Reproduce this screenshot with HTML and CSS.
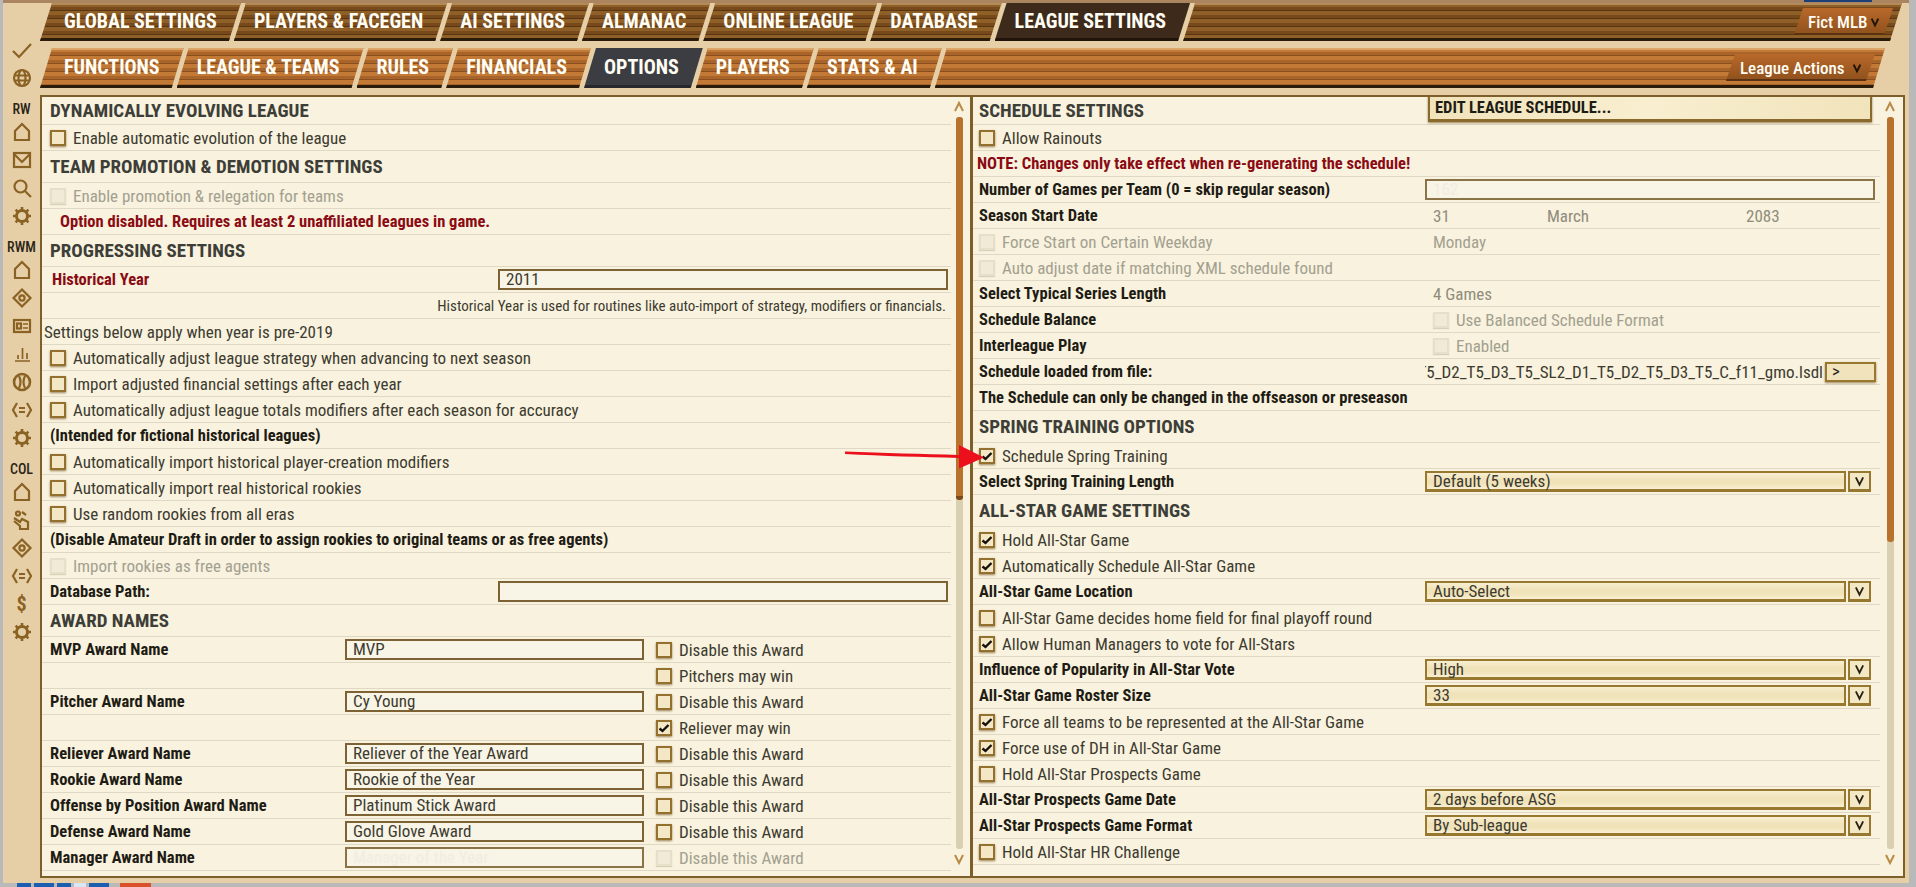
FILE: index.html
```html
<!DOCTYPE html>
<html lang="en">
<head>
    <meta charset="UTF-8">
    <title>League Settings</title>
    <link rel="stylesheet" href="styles.css">
</head>
<body>
<svg class="defs" width="0" height="0">
    <symbol id="i-check" viewBox="0 0 22 22"><path d="M2 12l6 6L20 5"/></symbol>
    <symbol id="i-globe" viewBox="0 0 22 22"><circle cx="11" cy="11" r="8"/><ellipse cx="11" cy="11" rx="3.5" ry="8"/><path d="M3 8.5h16M3 13.5h16"/></symbol>
    <symbol id="i-home" viewBox="0 0 22 22"><path d="M11 3l7 7v9H4v-9z"/></symbol>
    <symbol id="i-mail" viewBox="0 0 22 22"><rect x="3" y="4" width="16" height="14"/><path d="M3 5l8 8 8-8"/></symbol>
    <symbol id="i-search" viewBox="0 0 22 22"><circle cx="9.5" cy="9.5" r="6"/><path d="M14 14l6 6"/></symbol>
    <symbol id="i-gear" viewBox="0 0 22 22"><circle cx="11" cy="11" r="5.5" stroke-width="3"/><path d="M11 2v4M11 16v4M2 11h4M16 11h4M4.6 4.6l3 3M14.4 14.4l3 3M4.6 17.4l3-3M14.4 7.6l3-3" stroke-width="2.6"/></symbol>
    <symbol id="i-target" viewBox="0 0 22 22"><path d="M11 2.5l8.5 8.5-8.5 8.5L2.5 11z"/><circle cx="11" cy="11" r="2.6"/></symbol>
    <symbol id="i-card" viewBox="0 0 22 22"><rect x="3" y="5" width="16" height="12"/><rect x="6" y="8.5" width="4" height="5" class="fill"/><path d="M12 9h5M12 13h5" stroke-width="1.5"/></symbol>
    <symbol id="i-chart" viewBox="0 0 22 22"><path d="M4 18h15M7 16v-4M11.500 16V5M16 16V10" stroke-width="1.7"/></symbol>
    <symbol id="i-ball" viewBox="0 0 22 22"><circle cx="11" cy="11" r="8" stroke-width="2.6"/><path d="M8 5c2 4 2 8 0 12M14 5c-2 4-2 8 0 12"/></symbol>
    <symbol id="i-swap" viewBox="0 0 22 22"><path d="M6 4l-4 7 4 7M16 4l4 7-4 7M8 9h6M8 13h6"/></symbol>
    <symbol id="i-hand" viewBox="0 0 22 22"><circle cx="7" cy="4.500" r="2"/><path d="M3 9l6 4 2-3 6 3v7H9v-3l-6-5M11 3l4 3"/></symbol>
    <symbol id="i-mark" viewBox="0 0 12 12"><path d="M1.500 6.500l3 2.500 6-6"/></symbol>
    <symbol id="i-v" viewBox="0 0 12 12"><path d="M2 2l4 8 4-8"/></symbol>
    <symbol id="i-up" viewBox="0 0 12 12"><path d="M2 10l4-8 4 8"/></symbol>
</svg>

<div class="behind-top"></div>
<div class="window">
    <aside class="sidebar">
        <svg class="icon"><use href="#i-check"/></svg>
        <svg class="icon"><use href="#i-globe"/></svg>
        <div class="side-label">RW</div>
        <svg class="icon"><use href="#i-home"/></svg>
        <svg class="icon"><use href="#i-mail"/></svg>
        <svg class="icon"><use href="#i-search"/></svg>
        <svg class="icon"><use href="#i-gear"/></svg>
        <div class="side-label">RWM</div>
        <svg class="icon"><use href="#i-home"/></svg>
        <svg class="icon"><use href="#i-target"/></svg>
        <svg class="icon"><use href="#i-card"/></svg>
        <svg class="icon"><use href="#i-chart"/></svg>
        <svg class="icon"><use href="#i-ball"/></svg>
        <svg class="icon"><use href="#i-swap"/></svg>
        <svg class="icon"><use href="#i-gear"/></svg>
        <div class="side-label">COL</div>
        <svg class="icon"><use href="#i-home"/></svg>
        <svg class="icon"><use href="#i-hand"/></svg>
        <svg class="icon"><use href="#i-target"/></svg>
        <svg class="icon"><use href="#i-swap"/></svg>
        <div class="dollar">$</div>
        <svg class="icon"><use href="#i-gear"/></svg>
    </aside>

    <main class="main">
        <nav class="tabs tabs-top">
            <a class="tab first">GLOBAL SETTINGS</a>
            <a class="tab">PLAYERS &amp; FACEGEN</a>
            <a class="tab">AI SETTINGS</a>
            <a class="tab">ALMANAC</a>
            <a class="tab">ONLINE LEAGUE</a>
            <a class="tab">DATABASE</a>
            <a class="tab active">LEAGUE SETTINGS</a>
            <div class="tab tail"><a class="bar-menu menu-fict">Fict MLB <svg class="menu-v"><use href="#i-v"/></svg></a></div>
        </nav>
        <nav class="tabs tabs-sub">
            <a class="tab first">FUNCTIONS</a>
            <a class="tab">LEAGUE &amp; TEAMS</a>
            <a class="tab">RULES</a>
            <a class="tab">FINANCIALS</a>
            <a class="tab active">OPTIONS</a>
            <a class="tab">PLAYERS</a>
            <a class="tab">STATS &amp; AI</a>
            <div class="tab tail"><a class="bar-menu menu-actions">League Actions <svg class="menu-v"><use href="#i-v"/></svg></a></div>
        </nav>

        <div class="panel">
            <section class="pane pane-left">
                <div class="rows">
                    <div class="row head first-head">DYNAMICALLY EVOLVING LEAGUE</div>
                    <div class="row"><span class="chk"></span>Enable automatic evolution of the league</div>
                    <div class="row head">TEAM PROMOTION &amp; DEMOTION SETTINGS</div>
                    <div class="row off"><span class="chk"></span>Enable promotion &amp; relegation for teams</div>
                    <div class="row warn indent">Option disabled. Requires at least 2 unaffiliated leagues in game.</div>
                    <div class="row head">PROGRESSING SETTINGS</div>
                    <div class="row"><span class="lbl hist">Historical Year</span><div class="field field-wide">2011</div></div>
                    <div class="row hint">Historical Year is used for routines like auto-import of strategy, modifiers or financials.</div>
                    <div class="row flush">Settings below apply when year is pre-2019</div>
                    <div class="row"><span class="chk"></span>Automatically adjust league strategy when advancing to next season</div>
                    <div class="row"><span class="chk"></span>Import adjusted financial settings after each year</div>
                    <div class="row"><span class="chk"></span>Automatically adjust league totals modifiers after each season for accuracy</div>
                    <div class="row strong">(Intended for fictional historical leagues)</div>
                    <div class="row"><span class="chk"></span>Automatically import historical player-creation modifiers</div>
                    <div class="row"><span class="chk"></span>Automatically import real historical rookies</div>
                    <div class="row"><span class="chk"></span>Use random rookies from all eras</div>
                    <div class="row strong">(Disable Amateur Draft in order to assign rookies to original teams or as free agents)</div>
                    <div class="row off"><span class="chk"></span>Import rookies as free agents</div>
                    <div class="row"><span class="lbl hist-db">Database Path:</span><div class="field field-wide"></div></div>
                    <div class="row head">AWARD NAMES</div>
                    <div class="row award"><span class="lbl">MVP Award Name</span><div class="field">MVP</div><div class="award-opt"><span class="chk"></span>Disable this Award</div></div>
                    <div class="row award"><div class="award-opt only"><span class="chk"></span>Pitchers may win</div></div>
                    <div class="row award"><span class="lbl">Pitcher Award Name</span><div class="field">Cy Young</div><div class="award-opt"><span class="chk"></span>Disable this Award</div></div>
                    <div class="row award"><div class="award-opt only"><span class="chk on"><svg><use href="#i-mark"/></svg></span>Reliever may win</div></div>
                    <div class="row award"><span class="lbl">Reliever Award Name</span><div class="field">Reliever of the Year Award</div><div class="award-opt"><span class="chk"></span>Disable this Award</div></div>
                    <div class="row award"><span class="lbl">Rookie Award Name</span><div class="field">Rookie of the Year</div><div class="award-opt"><span class="chk"></span>Disable this Award</div></div>
                    <div class="row award"><span class="lbl">Offense by Position Award Name</span><div class="field">Platinum Stick Award</div><div class="award-opt"><span class="chk"></span>Disable this Award</div></div>
                    <div class="row award"><span class="lbl">Defense Award Name</span><div class="field">Gold Glove Award</div><div class="award-opt"><span class="chk"></span>Disable this Award</div></div>
                    <div class="row award"><span class="lbl">Manager Award Name</span><div class="field ghost">Manager of the Year</div><div class="award-opt off"><span class="chk"></span>Disable this Award</div></div>
                </div>
                <div class="scroll">
                    <svg class="scroll-arrow"><use href="#i-up"/></svg>
                    <div class="track"><div class="thumb thumb-left"></div></div>
                    <svg class="scroll-arrow"><use href="#i-v"/></svg>
                </div>
            </section>

            <section class="pane pane-right">
                <div class="rows">
                    <div class="row head first-head"><span class="name">SCHEDULE SETTINGS</span><a class="edit-btn">EDIT LEAGUE SCHEDULE...</a></div>
                    <div class="row"><span class="chk"></span>Allow Rainouts</div>
                    <div class="row warn">NOTE: Changes only take effect when re-generating the schedule!</div>
                    <div class="row"><span class="name lbl">Number of Games per Team (0 = skip regular season)</span><div class="field field-right ghost">162</div></div>
                    <div class="row"><span class="name lbl">Season Start Date</span><div class="dates"><span>31</span><span>March</span><span>2083</span></div></div>
                    <div class="row off"><span class="chk"></span><span class="name-chk">Force Start on Certain Weekday</span><span class="value">Monday</span></div>
                    <div class="row off"><span class="chk"></span>Auto adjust date if matching XML schedule found</div>
                    <div class="row"><span class="name lbl">Select Typical Series Length</span><span class="value dim">4 Games</span></div>
                    <div class="row"><span class="name lbl">Schedule Balance</span><div class="off inline"><span class="chk"></span>Use Balanced Schedule Format</div></div>
                    <div class="row"><span class="name lbl">Interleague Play</span><div class="off inline"><span class="chk"></span>Enabled</div></div>
                    <div class="row"><span class="name lbl">Schedule loaded from file:</span><div class="file"><span>Fict_MLB_D1_T5_D2_T5_D3_T5_SL2_D1_T5_D2_T5_D3_T5_C_f11_gmo.lsdl</span></div><a class="file-btn">&gt;</a></div>
                    <div class="row"><span class="name lbl clipped">The Schedule can only be changed in the offseason or preseason</span></div>
                    <div class="row head">SPRING TRAINING OPTIONS</div>
                    <div class="row"><span class="chk on"><svg><use href="#i-mark"/></svg></span>Schedule Spring Training</div>
                    <div class="row"><span class="name lbl">Select Spring Training Length</span><div class="select">Default (5 weeks)</div><a class="select-btn"><svg><use href="#i-v"/></svg></a></div>
                    <div class="row head">ALL-STAR GAME SETTINGS</div>
                    <div class="row"><span class="chk on"><svg><use href="#i-mark"/></svg></span>Hold All-Star Game</div>
                    <div class="row"><span class="chk on"><svg><use href="#i-mark"/></svg></span>Automatically Schedule All-Star Game</div>
                    <div class="row"><span class="name lbl">All-Star Game Location</span><div class="select">Auto-Select</div><a class="select-btn"><svg><use href="#i-v"/></svg></a></div>
                    <div class="row"><span class="chk"></span>All-Star Game decides home field for final playoff round</div>
                    <div class="row"><span class="chk on"><svg><use href="#i-mark"/></svg></span>Allow Human Managers to vote for All-Stars</div>
                    <div class="row"><span class="name lbl">Influence of Popularity in All-Star Vote</span><div class="select">High</div><a class="select-btn"><svg><use href="#i-v"/></svg></a></div>
                    <div class="row"><span class="name lbl">All-Star Game Roster Size</span><div class="select">33</div><a class="select-btn"><svg><use href="#i-v"/></svg></a></div>
                    <div class="row"><span class="chk on"><svg><use href="#i-mark"/></svg></span>Force all teams to be represented at the All-Star Game</div>
                    <div class="row"><span class="chk on"><svg><use href="#i-mark"/></svg></span>Force use of DH in All-Star Game</div>
                    <div class="row"><span class="chk"></span>Hold All-Star Prospects Game</div>
                    <div class="row"><span class="name lbl">All-Star Prospects Game Date</span><div class="select">2 days before ASG</div><a class="select-btn"><svg><use href="#i-v"/></svg></a></div>
                    <div class="row"><span class="name lbl">All-Star Prospects Game Format</span><div class="select">By Sub-league</div><a class="select-btn"><svg><use href="#i-v"/></svg></a></div>
                    <div class="row"><span class="chk"></span>Hold All-Star HR Challenge</div>
                </div>
                <div class="scroll">
                    <svg class="scroll-arrow"><use href="#i-up"/></svg>
                    <div class="track"><div class="thumb thumb-right"></div></div>
                    <svg class="scroll-arrow"><use href="#i-v"/></svg>
                </div>
            </section>
        </div>
    </main>

    <svg class="red-arrow" width="150" height="30" viewBox="0 0 150 30">
        <path d="M2 7.500C40 9 80 10 116 11V1l25 12.500-25 11V14C80 13 40 12 2 10z"/>
    </svg>
</div>
<div class="behind-bottom">
    <span class="blue"></span><span class="blue short"></span><span class="blue"></span><span class="light"></span><span class="blue short"></span><span class="red"></span>
</div>
</body>
</html>
```
FILE: styles.css
```css
html, body {
    margin: 0;
    height: 100%;
    overflow: hidden;
}
body {
    background-color: #b9b9b9;
    font-family: Roboto, "Liberation Sans", sans-serif;
    font-stretch: 84%;
    font-size: 17px;
    color: #3d3b30;
    position: relative;
}
.defs {
    position: absolute;
}
.behind-top {
    position: absolute;
    left: 1804px;
    top: 0;
    width: 68px;
    height: 2px;
    background-color: #1c3f7a;
    z-index: 2;
}

/* window */
.window {
    position: relative;
    margin-left: 3px;
    width: 1906px;
    height: 883px;
    box-sizing: border-box;
    border-top: 3px solid #ab8460;
    background-color: #e6cfa6;
    display: flex;
}

/* left icon column */
.sidebar {
    width: 37px;
    flex: none;
    padding-top: 33px;
    display: flex;
    flex-direction: column;
    align-items: center;
}
.icon {
    width: 22px;
    height: 28px;
    flex: none;
    fill: none;
    stroke: #8a6224;
    stroke-width: 2.2;
}
.icon .fill {
    fill: #8a6224;
}
.side-label {
    height: 18px;
    line-height: 18px;
    margin-top: 8px;
    font-size: 14px;
    font-weight: 500;
    font-stretch: 75%;
    color: #2a2418;
}
.dollar {
    height: 28px;
    line-height: 28px;
    font-size: 20px;
    font-weight: 700;
    color: #8a6224;
}

/* tab bars */
.main {
    width: 1865px;
    flex: none;
}
.tabs {
    display: flex;
    font-weight: 700;
    font-size: 20px;
    font-stretch: 75%;
    color: #fffdf4;
}
.tabs-top {
    height: 38px;
    margin-bottom: 7px;
    width: 1862px;
    --stripe-a: #8f5f28;
    --stripe-b: #77491b;
    --stripe-c: #593613;
    --edge: #b48a58;
}
.tabs-sub {
    height: 40px;
    margin-bottom: 7px;
    width: 1845px;
    --stripe-a: #c27a36;
    --stripe-b: #a9642a;
    --stripe-c: #8b4f1f;
    --edge: #dba468;
}
.tab {
    display: flex;
    align-items: center;
    box-sizing: border-box;
    margin-left: -7px;
    padding: 0 24px 3px 20px;
    white-space: nowrap;
    background:
        linear-gradient(to top, #2b1b0a 0 3px, transparent 3px),
        linear-gradient(var(--edge) 0 2px, transparent 2px),
        repeating-linear-gradient(var(--stripe-a) 0 4px, var(--stripe-b) 4px 7px, var(--stripe-c) 7px 8px);
    clip-path: polygon(12px 0, 100% 0, calc(100% - 12px) 100%, 0 100%);
}
.tab.first {
    margin-left: 0;
    padding-left: 24px;
}
.tabs-top .tab.active {
    background: linear-gradient(to top, #20140a 0 3px, #3d2a1a 3px);
}
.tabs-sub .tab.active {
    background: linear-gradient(to top, #27282c 0 3px, #3c3d42 3px);
}
.tab.tail {
    flex: 1;
    justify-content: flex-end;
    padding-right: 0;
}
.bar-menu {
    display: flex;
    align-items: center;
    font-size: 17px;
    font-weight: 500;
    font-stretch: 84%;
    height: 27px;
    box-sizing: border-box;
    background: linear-gradient(to top, #5a3212 0 2px, #91521d 2px, #b9692a);
    clip-path: polygon(9px 0, 100% 0, calc(100% - 9px) 100%, 0 100%);
}
.menu-fict {
    width: 99px;
    padding-left: 14px;
    margin-right: 9px;
    margin-top: 2px;
}
.menu-actions {
    width: 149px;
    padding-left: 14px;
    margin-right: 10px;
    margin-top: 2px;
}
.menu-v {
    width: 10px;
    height: 12px;
    margin-left: auto;
    margin-right: 13px;
    fill: none;
    stroke: #1e1408;
    stroke-width: 2.4;
}

/* main panel */
.panel {
    box-sizing: border-box;
    width: 1865px;
    height: 783px;
    border: 2px solid #7d5f2c;
    background-color: #f8f2de;
    display: grid;
    grid-template-columns: 931px 1fr;
    overflow: hidden;
}
.pane {
    display: flex;
    height: 779px;
    overflow: hidden;
}
.pane-left {
    border-right: 3px solid #7d5f2c;
}
.pane-left .rows {
    width: 909px;
}
.pane-right .rows {
    width: 907px;
}
.rows {
    flex: none;
}
.row {
    box-sizing: border-box;
    height: 26px;
    border-bottom: 1px solid #ded8c4;
    padding-left: 8px;
    display: flex;
    align-items: center;
    white-space: nowrap;
    position: relative;
}
.pane-right .row {
    padding-left: 6px;
}
.row.head {
    height: 32px;
    font-size: 19px;
    font-weight: 700;
    font-stretch: 75%;
    color: #3e3e38;
}
.row.first-head {
    height: 28px;
}
.lbl, .strong {
    font-weight: 700;
    font-stretch: 75%;
    font-size: 16.500px;
    color: #1e1c14;
}
.hist {
    color: #8a0b14;
    width: 446px;
    margin-left: 2px;
}
.hist-db {
    width: 446px;
    margin-right: 2px;
}
.warn {
    font-weight: 700;
    font-stretch: 75%;
    font-size: 16.500px;
    color: #8a0b14;
}
.pane-right .warn {
    padding-left: 4px;
}
.warn.indent {
    padding-left: 18px;
}
.hint {
    justify-content: flex-end;
    padding-right: 5px;
    font-size: 15px;
}
.flush {
    padding-left: 2px;
}
.off {
    color: #a3a090;
}
.inline {
    display: flex;
    align-items: center;
    margin-left: 8px;
}

/* checkboxes */
.chk {
    box-sizing: border-box;
    width: 16px;
    height: 16px;
    flex: none;
    margin-right: 7px;
    border: 2px solid #94702f;
    background-color: #f3e7c6;
    box-shadow: 0 1px 2px #9a8258;
    display: flex;
    align-items: center;
    justify-content: center;
}
.chk svg {
    width: 12px;
    height: 12px;
    fill: none;
    stroke: #14100a;
    stroke-width: 2.4;
}
.off .chk {
    border-color: #e6dfca;
    background-color: #f1ead6;
    box-shadow: 0 1px 1px #d8d0b8;
}

/* fields */
.field {
    box-sizing: border-box;
    height: 21px;
    line-height: 17px;
    border: 2px solid #7d6233;
    background-color: #f8f4e6;
    padding-left: 6px;
    overflow: hidden;
}
.field-wide {
    width: 450px;
}
.field-right {
    width: 450px;
}
.field.ghost {
    color: #f1ede0;
    border-color: #8a7346;
}
.award {
    display: grid;
    grid-template-columns: 295px 299px 1fr;
}
.award-opt {
    display: flex;
    align-items: center;
    padding-left: 12px;
}
.award-opt.only {
    grid-column: 3;
}
.name {
    width: 446px;
    flex: none;
}
.name-chk {
    width: 423px;
    flex: none;
}
.clipped {
    overflow: hidden;
}
.value {
    margin-left: 8px;
    color: #a3a090;
}
.value.dim {
    color: #8f8c7c;
}
.dates {
    margin-left: 8px;
    display: grid;
    grid-template-columns: 114px 199px auto;
    color: #8f8c7c;
}
.file {
    width: 398px;
    overflow: hidden;
    display: flex;
    justify-content: flex-end;
    flex: none;
}
.file-btn {
    box-sizing: border-box;
    width: 51px;
    height: 20px;
    margin-left: 2px;
    padding-left: 5px;
    line-height: 15px;
    border: 2px solid #98772f;
    background-color: #f1e4bc;
    box-shadow: 0 1px 2px #9a8258;
    color: #1e1c14;
}
.select {
    box-sizing: border-box;
    width: 421px;
    height: 21px;
    line-height: 17px;
    padding-left: 6px;
    border: 2px solid #98772f;
    border-bottom-width: 3px;
    background: linear-gradient(#f8efd2, #f1e3b9 40%, #f1e3b9 70%, #f8efd2);
    flex: none;
}
.select-btn {
    box-sizing: border-box;
    width: 23px;
    height: 21px;
    margin-left: 2px;
    border: 2px solid #98772f;
    border-bottom-width: 3px;
    background-color: #f3e8c6;
    display: flex;
    align-items: center;
    justify-content: center;
}
.select-btn svg {
    width: 11px;
    height: 12px;
    fill: none;
    stroke: #2a2010;
    stroke-width: 2;
}
.edit-btn {
    position: absolute;
    left: 455px;
    top: -2px;
    width: 444px;
    height: 27px;
    box-sizing: border-box;
    border: 2px solid #8a6a2c;
    border-bottom-width: 3px;
    border-top-width: 2px;
    background: linear-gradient(90deg, #f1e3bb, #f8efd0 50%, #f1e3bb);
    padding-left: 5px;
    line-height: 22px;
    font-size: 16.500px;
    color: #1e1c14;
    box-shadow: 0 1px 2px #9a8258;
}

/* scrollbars */
.scroll {
    flex: 1;
    display: flex;
    flex-direction: column;
    align-items: center;
    padding-right: 3px;
}
.scroll-arrow {
    width: 12px;
    height: 14px;
    flex: none;
    margin: 3px 0;
    fill: none;
    stroke: #b98a48;
    stroke-width: 2;
}
.track {
    width: 7px;
    height: 732px;
    flex: none;
    background-color: #d9d0b2;
    border-radius: 3px;
}
.thumb {
    width: 7px;
    background-color: #b8722c;
    border-radius: 3px;
    border-bottom: 4px solid #7c4a18;
    box-sizing: border-box;
}
.thumb-left {
    height: 383px;
}
.thumb-right {
    height: 425px;
    border-bottom: 0;
}

/* annotation someone drew on the screenshot */
.red-arrow {
    position: absolute;
    left: 840px;
    top: 441px;
    fill: #ec0f1c;
}

/* what shows under the window */
.behind-bottom {
    display: flex;
    height: 4px;
    padding-left: 17px;
    gap: 3px;
}
.blue {
    width: 14px;
    background-color: #1c5fb0;
}
.blue.short {
    width: 20px;
}
.light {
    width: 12px;
    background-color: #d8e6f5;
}
.red {
    width: 31px;
    margin-left: 8px;
    background-color: #d9502a;
}
```
